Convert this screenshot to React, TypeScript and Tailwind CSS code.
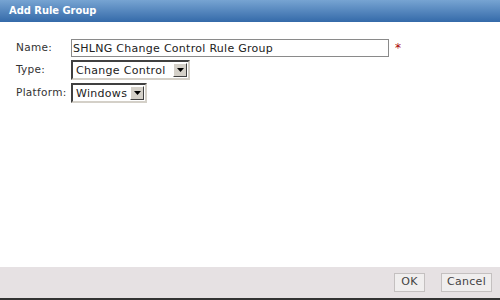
import React from 'react';

function SelectBox({ value, width }: { value: string; width: string }) {
  return (
    <div
      className={`flex items-center h-[20px] ${width} bg-white border-2 border-t-[#404040] border-l-[#404040] border-b-[#d4d0c8] border-r-[#d4d0c8] pl-[3px] pr-[1px]`}
    >
      <span className="flex-1 text-[11px] tracking-[0.3px] leading-none text-[#222]">{value}</span>
      <span className="flex items-center justify-center w-[14px] h-[14px] bg-[#d4d0c8] border border-t-white border-l-white border-b-[#404040] border-r-[#404040]">
        <svg width="7" height="4" viewBox="0 0 7 4">
          <path d="M0 0h7L3.5 4z" fill="#000" />
        </svg>
      </span>
    </div>
  );
}

export default function App() {
  return (
    <div
      className="w-[500px] h-[300px] flex flex-col bg-white text-[11px] text-[#333]"
      style={{ fontFamily: '"DejaVu Sans", Verdana, sans-serif' }}
    >
      <div className="h-[22px] flex items-center px-[9px] bg-gradient-to-b from-[#77a4d2] to-[#346aa9]">
        <span
          className="text-white font-bold text-[11px]"
          style={{ fontFamily: '"DejaVu Sans Condensed", "DejaVu Sans", sans-serif' }}
        >
          Add Rule Group
        </span>
      </div>

      <div className="flex-1 flex flex-col gap-[3px] pt-[17px] pl-[16px]">
        <div className="flex items-center">
          <span className="w-[55px] text-[10.5px] tracking-[0.3px]">Name:</span>
          <div className="h-[18px] w-[318px] border border-[#8a8a8a] flex items-center pl-[1px]">
            <span className="text-[11px] tracking-[0.28px] text-[#222] leading-none">SHLNG Change Control Rule Group</span>
          </div>
          <span className="ml-[6px] text-[#a00] text-[12px]">*</span>
        </div>
        <div className="flex items-center">
          <span className="w-[55px] text-[10.5px] tracking-[0.3px]">Type:</span>
          <SelectBox value="Change Control" width="w-[119px]" />
        </div>
        <div className="flex items-center">
          <span className="w-[55px] text-[10.5px] tracking-[0.3px]">Platform:</span>
          <SelectBox value="Windows" width="w-[76px]" />
        </div>
      </div>

      <div className="h-[33px] bg-[#e6e1e3] border-b-2 border-[#333] flex items-center justify-end gap-[16px] pr-[8px] pb-[1px]">
        <button className="h-[19px] w-[31px] bg-[#f0eeee] border border-[#c4c0c0] text-[11px] tracking-[0.3px] text-[#444]">OK</button>
        <button className="h-[19px] w-[51px] bg-[#f0eeee] border border-[#c4c0c0] text-[11px] tracking-[0.3px] text-[#444]">Cancel</button>
      </div>
    </div>
  );
}
